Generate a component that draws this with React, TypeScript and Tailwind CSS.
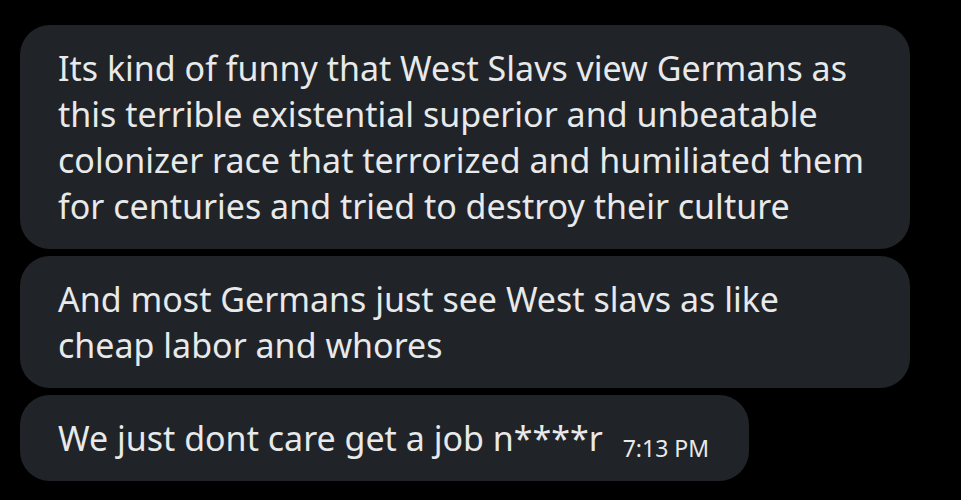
const font = { fontFamily: '"Noto Sans", "Open Sans", sans-serif' };

function Bubble({ children, full = true }: { children: React.ReactNode; full?: boolean }) {
  return (
    <div
      className={`whitespace-nowrap rounded-[30px] bg-[#202327] py-[20px] pl-[38px] pr-[40px] text-[34px] leading-[46px] text-[#e7e9ea] ${
        full ? "w-[890px]" : "w-fit"
      }`}
    >
      {children}
    </div>
  );
}

export default function App() {
  return (
    <div className="h-[500px] w-[961px] bg-black pl-[20px] pt-[25px]" style={font}>
      <div className="flex flex-col items-start gap-[7px]">
        <Bubble>
          Its kind of funny that West Slavs view Germans as
          <br />
          this terrible existential superior and unbeatable
          <br />
          colonizer race that terrorized and humiliated them
          <br />
          for centuries and tried to destroy their culture
        </Bubble>
        <Bubble>
          And most Germans just see West slavs as like
          <br />
          cheap labor and whores
        </Bubble>
        <Bubble full={false}>
          <span className="flex items-baseline gap-[20px]">
            <span>We just dont care get a job n****r</span>
            <span className="translate-y-[6px] text-[23px] leading-none">7:13 PM</span>
          </span>
        </Bubble>
      </div>
    </div>
  );
}
